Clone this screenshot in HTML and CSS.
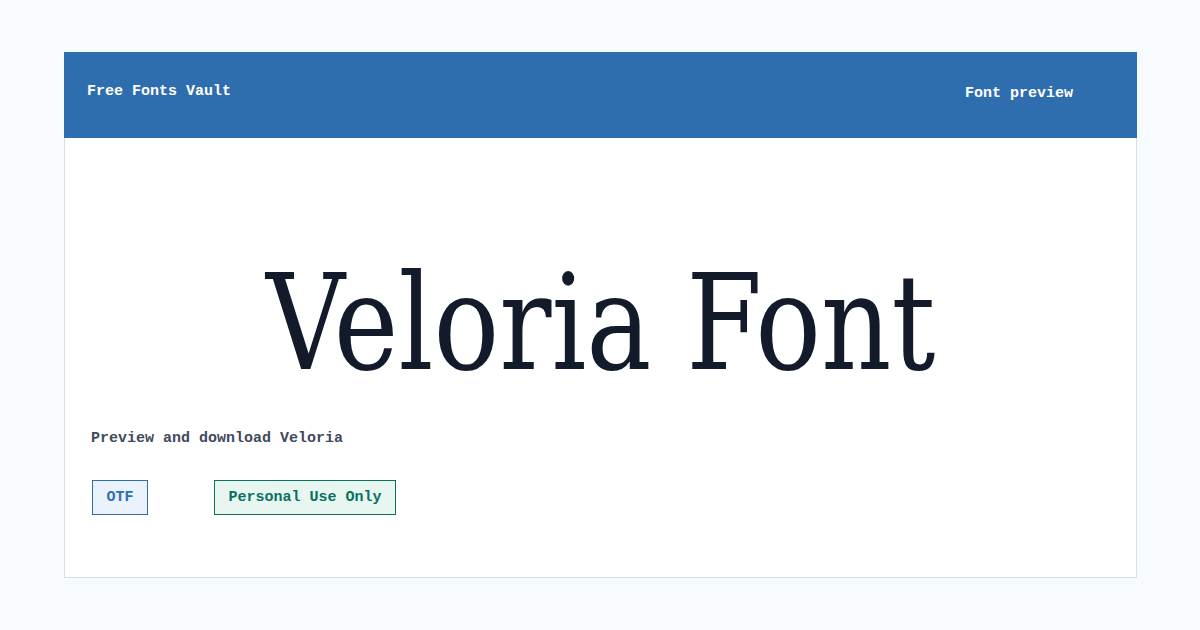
FILE: index.html
```html
<!DOCTYPE html>
<html lang="en">
<head>
    <meta charset="UTF-8">
    <meta name="viewport" content="width=device-width, initial-scale=1.0">
    <title>Veloria Font - Free Fonts Vault</title>
    <link rel="stylesheet" href="styles.css">
</head>
<body>
    <div class="card">
        <header class="topbar">
            <span class="brand">Free Fonts Vault</span>
            <span class="section">Font preview</span>
        </header>
        <main class="content">
            <div class="specimen">
                <h1>Veloria Font</h1>
            </div>
            <p class="lead">Preview and download Veloria</p>
            <div class="tags">
                <span class="tag format">OTF</span>
                <span class="tag license">Personal Use Only</span>
            </div>
        </main>
    </div>
</body>
</html>
```

FILE: styles.css
```css
body {
    font-family: 'Liberation Mono', 'DejaVu Sans Mono', monospace;
    font-size: 15px;
    font-weight: bold;
    background-color: #f7faff;
    margin: 0;
    padding: 52px 63px 0 64px;
}

.card {
    background-color: #fff;
    border: 1px solid #d6dee8;
    border-top: none;
    height: 526px;
    box-sizing: border-box;
    display: flex;
    flex-direction: column;
}

.topbar {
    background-color: #2f6eae;
    color: #fff;
    height: 87px;
    margin: 0 -1px;
    padding: 0 64px 0 23px;
    display: flex;
    align-items: center;
    justify-content: space-between;
}

.brand {
    margin-bottom: 7px;
}

.section {
    margin-bottom: 4px;
}

.content {
    flex: 1;
    padding: 0 26px 62px;
    display: flex;
    flex-direction: column;
}

.specimen {
    height: 284px;
    box-sizing: border-box;
    padding-top: 86px;
    display: flex;
    align-items: center;
    justify-content: center;
}

/* condensed display cut of the specimen */
h1 {
    margin: 0;
    font-family: 'DejaVu Serif Condensed', 'DejaVu Serif', serif;
    font-weight: normal;
    font-size: 132px;
    color: #131b2b;
    line-height: 1;
    transform: scaleX(0.92);
}

.lead {
    margin: 8px 0 0;
    color: #3f4a5c;
}

.tags {
    margin-top: 33px;
    display: flex;
    gap: 66px;
}

.tag {
    padding: 8px 13.5px;
    border: 1px solid;
}

.format {
    margin-left: 1px;
    color: #2f6eae;
    border-color: #2f6eae;
    background-color: #e9f2fd;
}

.license {
    color: #0b7060;
    border-color: #0b7060;
    background-color: #e7f6f1;
}
```
